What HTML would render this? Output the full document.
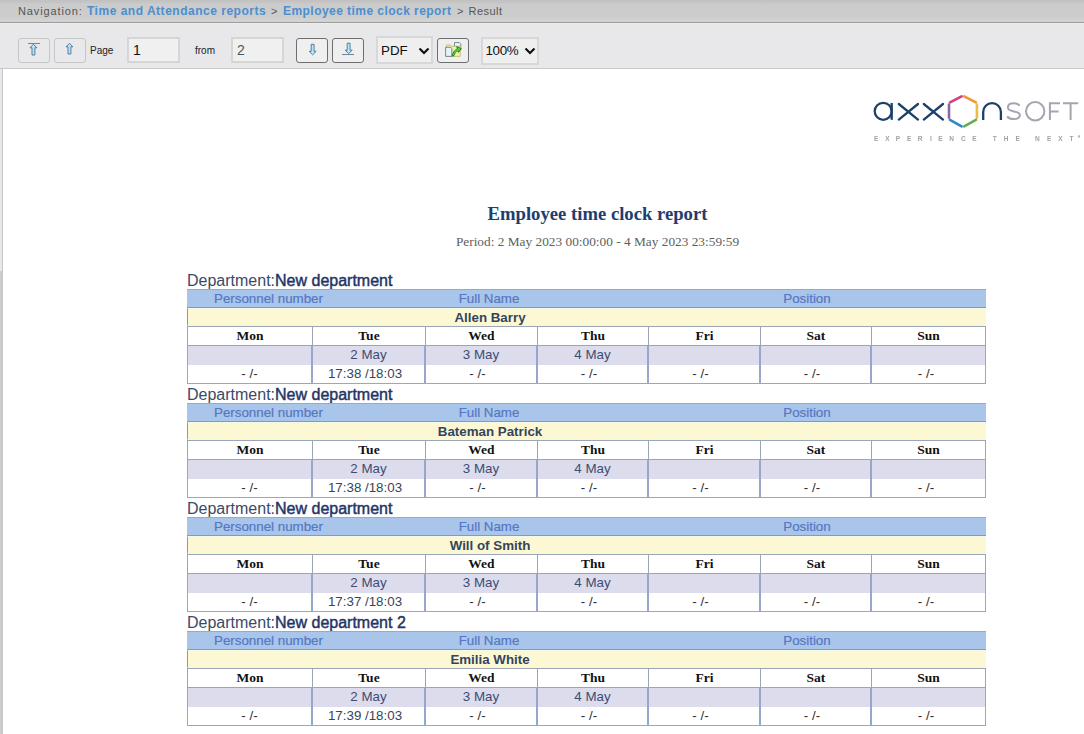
<!DOCTYPE html>
<html><head><meta charset="utf-8">
<style>
*{box-sizing:border-box;margin:0;padding:0}
html,body{width:1084px;height:734px;overflow:hidden;background:#fff;font-family:"Liberation Sans",sans-serif}
.a{position:absolute}
svg{display:block}
#nav{left:0;top:0;width:1084px;height:23px;background:linear-gradient(#c1c1c1 0,#c4c4c4 2px,#cbcbcb 4px,#cdcdcd 18px,#d2d2d2 19px,#d2d2d2 22px);border-bottom:1px solid #9c9c9c}
.nv{top:5px;font-size:11px;line-height:13px;color:#555;white-space:nowrap}
.nb{font-weight:bold;color:#4a8fd0;font-size:12px;top:5px}
#tb{left:0;top:23px;width:1084px;height:46px;background:linear-gradient(#eeeef0 0,#eeeef0 1px,#e8e8eb 1px);border-bottom:1px solid #c9c9cc}
#ls1{left:0;top:69px;width:3px;height:665px;background:#e8e8eb;border-right:1px solid #c8c8cc}
#ls2{left:0;top:271px;width:2px;height:463px;background:#cccccc}
.btn{height:25px;width:32px;border:1px solid #6e6e6e;border-radius:3px;background:#efefef}
.btn.dis{border-color:#c6c6c6;background:#e9e9eb}
.inp{height:26px;border:2px solid #d6d6d6;background:#f0f0f0;font-size:14px;color:#111;padding-left:4px;line-height:23px}
.sel{height:28px;border:2px solid #d8d8d8;background:#efefef;font-size:13.33px;line-height:15px;color:#111}
.chev{position:absolute;top:10px}
.lbl{top:45px;font-size:10px;line-height:12px;color:#222}
#title{left:0;top:202.5px;width:1195px;text-align:center;font-family:"Liberation Serif",serif;font-weight:bold;font-size:18.67px;line-height:22px;color:#213d70;white-space:nowrap}
#period{left:0;top:234px;width:1195px;text-align:center;font-family:"Liberation Serif",serif;font-size:13.33px;line-height:16px;color:#606060;white-space:nowrap}
.dept{left:187px;margin-top:1px;font-size:16px;line-height:18px;color:#3a4a66;white-space:nowrap}
.dept b{color:#1f3566;font-weight:normal;-webkit-text-stroke:0.45px #1f3566}
.hdr{left:187px;width:799px;height:19px;background:#a9c5e9;border-bottom:1px solid #8a9ab0;border-top:1px solid #98a9c6}
.hdr span{position:absolute;top:1px;font-size:13.33px;line-height:15px;color:#5577c4;-webkit-text-stroke:0.2px #5577c4;white-space:nowrap;text-align:center}
.emp{left:187px;width:799px;height:18px;background:#fcf8d3;border-left:1px solid #8a9aaa;border-top:1px solid #f6f8e6;border-bottom:1px solid #f6f8e6}
.emp span{position:absolute;left:163px;width:278px;text-align:center;top:1px;font-size:13.33px;line-height:15px;font-weight:bold;color:#33455e;white-space:nowrap}
.dh{height:20px;border:1px solid #9aa6b8;background:#fff}
.dh span{position:absolute;left:0;right:0;text-align:center;top:1px;font-family:"Liberation Serif",serif;font-weight:bold;font-size:13.5px;line-height:15px;color:#111}
.db{height:38px;border:1px solid #94a8cc;background:#fff;border-top:none}
.db .lav{position:absolute;left:0;right:0;top:0;height:19px;background:#dcdcec}
.db span{position:absolute;left:0;right:0;text-align:center;font-size:13.33px;line-height:15px;white-space:nowrap}
.db .d{top:1px;color:#3b4c74}
.db .t{top:20px;color:#2f2f33}
.db .tm{color:#38445a}
</style></head><body>
<div id="nav" class="a"></div>
<div class="a nv" style="left:18px;letter-spacing:0.87px">Navigation:</div>
<div class="a nv nb" style="left:87px;letter-spacing:0.51px">Time and Attendance reports</div>
<div class="a nv" style="left:271px">&gt;</div>
<div class="a nv nb" style="left:283px;letter-spacing:0.45px">Employee time clock report</div>
<div class="a nv" style="left:457px">&gt;</div>
<div class="a nv" style="left:468.5px;letter-spacing:0.46px">Result</div>
<div id="tb" class="a"></div>
<div id="ls1" class="a"></div>
<div id="ls2" class="a"></div>
<div class="a btn dis" style="left:18px;top:38px"><svg width="30" height="23" viewBox="19 39 30 23"><path d="M28 43.5H40" stroke="#6f8ba0" stroke-width="1.1" fill="none"/><path d="M33.45 44.2L36.9 47.8H34.9V55H32V47.8H30Z" fill="#b2e8fc" stroke="#4f7090" stroke-width="0.9" stroke-linejoin="round"/></svg></div>
<div class="a btn dis" style="left:54px;top:38px"><svg width="30" height="23" viewBox="55 39 30 23"><path d="M69.45 43.3L72.9 46.8H70.9V54H68V46.8H66Z" fill="#b2e8fc" stroke="#4f7090" stroke-width="0.9" stroke-linejoin="round"/></svg></div>
<div class="a lbl" style="left:90px">Page</div>
<div class="a inp" style="left:127px;top:37px;width:53px">1</div>
<div class="a lbl" style="left:195px">from</div>
<div class="a inp" style="left:231px;top:37px;width:53px;color:#555">2</div>
<div class="a btn" style="left:296px;top:38px"><svg width="30" height="23" viewBox="297 39 30 23"><path d="M311.2 44.3H314.1V51.3H316.2L312.65 54.8L309.1 51.3H311.2Z" fill="#b2e8fc" stroke="#4f7090" stroke-width="0.9" stroke-linejoin="round"/></svg></div>
<div class="a btn" style="left:332px;top:38px"><svg width="30" height="23" viewBox="333 39 30 23"><path d="M347.2 43.2H350.1V50.2H352.2L348.65 53.6L345.1 50.2H347.2Z" fill="#b2e8fc" stroke="#4f7090" stroke-width="0.9" stroke-linejoin="round"/><path d="M342 54.5H354" stroke="#6f8ba0" stroke-width="1.1"/></svg></div>
<div class="a sel" style="left:376px;top:36px;width:57px"><span style="position:absolute;left:3px;top:5px">PDF</span><svg class="chev" style="left:39.5px;top:8.5px" width="12" height="8" viewBox="0 0 12 8"><path d="M1.5 1.5L6 6L10.5 1.5" stroke="#111" stroke-width="2.2" fill="none"/></svg></div>
<div class="a btn" style="left:437px;top:38px"><svg width="30" height="23" viewBox="438 39 30 23">
<path d="M454.5 42.5H459.3L460.8 44V50H454.5Z" fill="#dff3fb" stroke="#75838f" stroke-width="0.9"/>
<path d="M446.5 45H450.5L451.5 46.3H460.3V56.4H446.5Z" fill="#eef0b0" stroke="#c2b070" stroke-width="0.8"/>
<path d="M445.6 47.3H450.8L451.8 48.5V56.4H445.6Z" fill="#e4f3f9" stroke="#6f7c86" stroke-width="0.9"/>
<path d="M452.2 56C452.8 52.2 455 49.6 457.6 48.6L456.6 46.6L461.2 48.6L458.6 52.4L458.2 50.6C456 51.6 454.4 53.4 453.8 56Z" fill="#5fd33e" stroke="#237a18" stroke-width="0.9" stroke-linejoin="round"/>
</svg></div>
<div class="a sel" style="left:480.5px;top:36.5px;width:58px"><span style="position:absolute;left:3px;top:4px;letter-spacing:-0.3px">100%</span><svg class="chev" style="left:41.5px;top:8.5px" width="12" height="8" viewBox="0 0 12 8"><path d="M1.5 1.5L6 6L10.5 1.5" stroke="#111" stroke-width="2.2" fill="none"/></svg></div>

<svg class="a" style="left:860px;top:85px;will-change:transform" width="224" height="65" viewBox="860 85 224 65">
<g fill="none" stroke="#1d4068" stroke-width="2.3" stroke-linecap="round">
<circle cx="883.2" cy="111.3" r="8.5"/>
<path d="M891.7 103V119.8" stroke-linecap="butt"/>
<path d="M898.8 104L918 119.6M918 104L898.8 119.6"/>
<path d="M923.8 104L943 119.6M943 104L923.8 119.6"/>
<path d="M983.2 120V112A8.85 8.85 0 0 1 1000.9 112V120" stroke-linecap="butt"/>
</g>
<g fill="none" stroke-width="2.6" stroke-linecap="round">
<path d="M950 102.4L961.6 96.3" stroke="#d6407a"/>
<path d="M964.2 96.3L975.9 102.4" stroke="#e9983a"/>
<path d="M976.9 104.6V117.8" stroke="#ecbc4a"/>
<path d="M975.9 119.9L964.2 126.4" stroke="#64ad4e"/>
<path d="M961.6 126.4L950 119.9" stroke="#2e8ac6"/>
<path d="M949 117.8V104.6" stroke="#8b66a8"/>
</g>
<g fill="none" stroke="#a3a6b0" stroke-width="2">
<path d="M1019.6 105.6C1018.2 103.9 1016.2 103.3 1013.7 103.3C1010.2 103.3 1007.9 105 1007.9 107.6C1007.9 113.2 1019.9 109.6 1019.9 115C1019.9 117.7 1017.5 119.1 1013.8 119.1C1010.8 119.1 1008.5 118.1 1007.2 116.3"/>
<circle cx="1035.2" cy="111.2" r="9.2"/>
<path d="M1060 103.3H1049.9V120M1049.9 111.6H1058.6"/>
<path d="M1063 103.3H1078.2M1070.6 103.3V120"/>
</g>
<g fill="#a2a2a2" font-family="Liberation Sans" font-size="6.5" font-weight="bold" text-anchor="middle" transform="translate(0 0.5)">
<text x="876.1" y="140.4">E</text><text x="887.3" y="140.4">X</text><text x="897.9" y="140.4">P</text><text x="909.1" y="140.4">E</text><text x="920.2" y="140.4">R</text><text x="930.9" y="140.4">I</text><text x="940.5" y="140.4">E</text><text x="951.7" y="140.4">N</text><text x="963.4" y="140.4">C</text><text x="974.5" y="140.4">E</text>
<text x="994.8" y="140.4">T</text><text x="1006" y="140.4">H</text><text x="1017.6" y="140.4">E</text>
<text x="1037.4" y="140.4">N</text><text x="1049.1" y="140.4">E</text><text x="1060.3" y="140.4">X</text><text x="1071.4" y="140.4">T</text><text x="1079" y="139">*</text>
</g>
</svg>

<div id="title" class="a">Employee time clock report</div>
<div id="period" class="a">Period: 2 May 2023 00:00:00 - 4 May 2023 23:59:59</div>
<div class="a dept" style="top:271px">Department:<b>New department</b></div>
<div class="a hdr" style="top:289px"><span style="left:0;width:163px">Personnel number</span><span style="left:163px;width:278px">Full Name</span><span style="left:441px;width:358px">Position</span></div>
<div class="a emp" style="top:308px"><span>Allen Barry</span></div>
<div class="a dh" style="left:187px;top:326px;width:126px"><span>Mon</span></div>
<div class="a dh" style="left:312px;top:326px;width:114px"><span>Tue</span></div>
<div class="a dh" style="left:425px;top:326px;width:113px"><span>Wed</span></div>
<div class="a dh" style="left:537px;top:326px;width:112px"><span>Thu</span></div>
<div class="a dh" style="left:648px;top:326px;width:113px"><span>Fri</span></div>
<div class="a dh" style="left:760px;top:326px;width:112px"><span>Sat</span></div>
<div class="a dh" style="left:871px;top:326px;width:115px"><span>Sun</span></div>
<div class="a db" style="left:187px;top:346px;width:125px"><div class="lav"></div><span class="d"></span><span class="t">- /-</span></div>
<div class="a db" style="left:312px;top:346px;width:113px"><div class="lav"></div><span class="d">2 May</span><span class="t tm" style="left:-7px">17:38 /18:03</span></div>
<div class="a db" style="left:425px;top:346px;width:112px"><div class="lav"></div><span class="d">3 May</span><span class="t" style="left:-7px">- /-</span></div>
<div class="a db" style="left:537px;top:346px;width:111px"><div class="lav"></div><span class="d">4 May</span><span class="t" style="left:-7px">- /-</span></div>
<div class="a db" style="left:648px;top:346px;width:112px"><div class="lav"></div><span class="d"></span><span class="t" style="left:-7px">- /-</span></div>
<div class="a db" style="left:760px;top:346px;width:111px"><div class="lav"></div><span class="d"></span><span class="t" style="left:-7px">- /-</span></div>
<div class="a db" style="left:871px;top:346px;width:115px"><div class="lav"></div><span class="d"></span><span class="t" style="left:-5px">- /-</span></div>
<div class="a dept" style="top:385px">Department:<b>New department</b></div>
<div class="a hdr" style="top:403px"><span style="left:0;width:163px">Personnel number</span><span style="left:163px;width:278px">Full Name</span><span style="left:441px;width:358px">Position</span></div>
<div class="a emp" style="top:422px"><span>Bateman Patrick</span></div>
<div class="a dh" style="left:187px;top:440px;width:126px"><span>Mon</span></div>
<div class="a dh" style="left:312px;top:440px;width:114px"><span>Tue</span></div>
<div class="a dh" style="left:425px;top:440px;width:113px"><span>Wed</span></div>
<div class="a dh" style="left:537px;top:440px;width:112px"><span>Thu</span></div>
<div class="a dh" style="left:648px;top:440px;width:113px"><span>Fri</span></div>
<div class="a dh" style="left:760px;top:440px;width:112px"><span>Sat</span></div>
<div class="a dh" style="left:871px;top:440px;width:115px"><span>Sun</span></div>
<div class="a db" style="left:187px;top:460px;width:125px"><div class="lav"></div><span class="d"></span><span class="t">- /-</span></div>
<div class="a db" style="left:312px;top:460px;width:113px"><div class="lav"></div><span class="d">2 May</span><span class="t tm" style="left:-7px">17:38 /18:03</span></div>
<div class="a db" style="left:425px;top:460px;width:112px"><div class="lav"></div><span class="d">3 May</span><span class="t" style="left:-7px">- /-</span></div>
<div class="a db" style="left:537px;top:460px;width:111px"><div class="lav"></div><span class="d">4 May</span><span class="t" style="left:-7px">- /-</span></div>
<div class="a db" style="left:648px;top:460px;width:112px"><div class="lav"></div><span class="d"></span><span class="t" style="left:-7px">- /-</span></div>
<div class="a db" style="left:760px;top:460px;width:111px"><div class="lav"></div><span class="d"></span><span class="t" style="left:-7px">- /-</span></div>
<div class="a db" style="left:871px;top:460px;width:115px"><div class="lav"></div><span class="d"></span><span class="t" style="left:-5px">- /-</span></div>
<div class="a dept" style="top:499px">Department:<b>New department</b></div>
<div class="a hdr" style="top:517px"><span style="left:0;width:163px">Personnel number</span><span style="left:163px;width:278px">Full Name</span><span style="left:441px;width:358px">Position</span></div>
<div class="a emp" style="top:536px"><span>Will of Smith</span></div>
<div class="a dh" style="left:187px;top:554px;width:126px"><span>Mon</span></div>
<div class="a dh" style="left:312px;top:554px;width:114px"><span>Tue</span></div>
<div class="a dh" style="left:425px;top:554px;width:113px"><span>Wed</span></div>
<div class="a dh" style="left:537px;top:554px;width:112px"><span>Thu</span></div>
<div class="a dh" style="left:648px;top:554px;width:113px"><span>Fri</span></div>
<div class="a dh" style="left:760px;top:554px;width:112px"><span>Sat</span></div>
<div class="a dh" style="left:871px;top:554px;width:115px"><span>Sun</span></div>
<div class="a db" style="left:187px;top:574px;width:125px"><div class="lav"></div><span class="d"></span><span class="t">- /-</span></div>
<div class="a db" style="left:312px;top:574px;width:113px"><div class="lav"></div><span class="d">2 May</span><span class="t tm" style="left:-7px">17:37 /18:03</span></div>
<div class="a db" style="left:425px;top:574px;width:112px"><div class="lav"></div><span class="d">3 May</span><span class="t" style="left:-7px">- /-</span></div>
<div class="a db" style="left:537px;top:574px;width:111px"><div class="lav"></div><span class="d">4 May</span><span class="t" style="left:-7px">- /-</span></div>
<div class="a db" style="left:648px;top:574px;width:112px"><div class="lav"></div><span class="d"></span><span class="t" style="left:-7px">- /-</span></div>
<div class="a db" style="left:760px;top:574px;width:111px"><div class="lav"></div><span class="d"></span><span class="t" style="left:-7px">- /-</span></div>
<div class="a db" style="left:871px;top:574px;width:115px"><div class="lav"></div><span class="d"></span><span class="t" style="left:-5px">- /-</span></div>
<div class="a dept" style="top:613px">Department:<b>New department 2</b></div>
<div class="a hdr" style="top:631px"><span style="left:0;width:163px">Personnel number</span><span style="left:163px;width:278px">Full Name</span><span style="left:441px;width:358px">Position</span></div>
<div class="a emp" style="top:650px"><span>Emilia White</span></div>
<div class="a dh" style="left:187px;top:668px;width:126px"><span>Mon</span></div>
<div class="a dh" style="left:312px;top:668px;width:114px"><span>Tue</span></div>
<div class="a dh" style="left:425px;top:668px;width:113px"><span>Wed</span></div>
<div class="a dh" style="left:537px;top:668px;width:112px"><span>Thu</span></div>
<div class="a dh" style="left:648px;top:668px;width:113px"><span>Fri</span></div>
<div class="a dh" style="left:760px;top:668px;width:112px"><span>Sat</span></div>
<div class="a dh" style="left:871px;top:668px;width:115px"><span>Sun</span></div>
<div class="a db" style="left:187px;top:688px;width:125px"><div class="lav"></div><span class="d"></span><span class="t">- /-</span></div>
<div class="a db" style="left:312px;top:688px;width:113px"><div class="lav"></div><span class="d">2 May</span><span class="t tm" style="left:-7px">17:39 /18:03</span></div>
<div class="a db" style="left:425px;top:688px;width:112px"><div class="lav"></div><span class="d">3 May</span><span class="t" style="left:-7px">- /-</span></div>
<div class="a db" style="left:537px;top:688px;width:111px"><div class="lav"></div><span class="d">4 May</span><span class="t" style="left:-7px">- /-</span></div>
<div class="a db" style="left:648px;top:688px;width:112px"><div class="lav"></div><span class="d"></span><span class="t" style="left:-7px">- /-</span></div>
<div class="a db" style="left:760px;top:688px;width:111px"><div class="lav"></div><span class="d"></span><span class="t" style="left:-7px">- /-</span></div>
<div class="a db" style="left:871px;top:688px;width:115px"><div class="lav"></div><span class="d"></span><span class="t" style="left:-5px">- /-</span></div>
</body></html>
